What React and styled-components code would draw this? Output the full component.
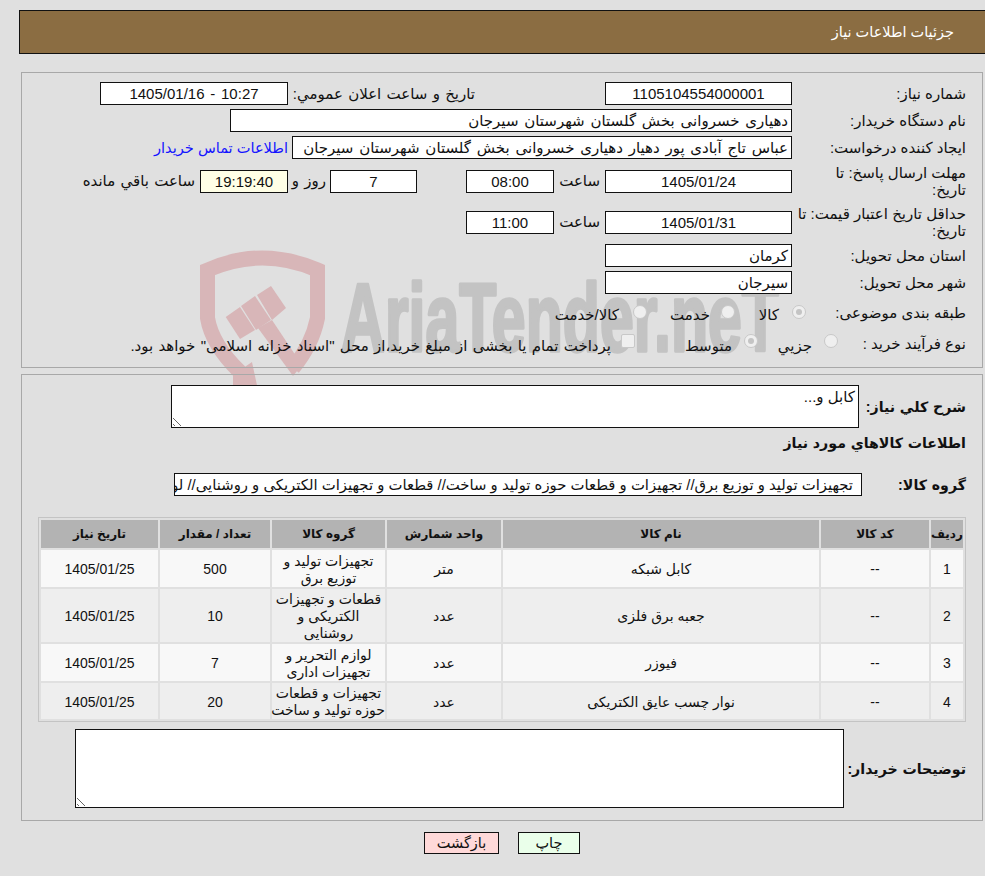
import React from "react";
import styled, { createGlobalStyle } from "styled-components";

const Global = createGlobalStyle`
  html, body { margin: 0; padding: 0; background: #e0e0e0; }
  body { font-family: "Liberation Sans", "DejaVu Sans", sans-serif; font-size: 15px; color: #111; overflow: hidden; }
`;
const Page = styled.div`
  width: 985px; height: 876px; direction: rtl; position: relative; overflow: hidden;
  padding-top: 10px; box-sizing: border-box;
`;
const Header = styled.div`
  margin-left: 19px; height: 44px; box-sizing: border-box; background: #8b6d42;
  border: 1px solid #111; border-right: none; color: #fff; font-size: 14.5px;
  display: flex; align-items: center; padding-right: 31px;
`;
const Panel = styled.div`
  margin: ${p => p.$top}px 2px 0 21px; height: ${p => p.$h}px; box-sizing: border-box;
  border: 1px solid #a8a8a8; position: relative; padding-top: ${p => p.$pt}px;
`;
const Watermark = styled.svg`
  position: absolute; left: 190px; top: 240px; pointer-events: none; direction: ltr;
`;
const Row = styled.div`
  display: flex; align-items: center; height: ${p => p.$h}px; margin-bottom: ${p => p.$mb ?? 4}px;
  margin-top: ${p => p.$mt || 0}px;
`;
const Label = styled.div`
  width: ${p => p.$w || 190}px; flex: none; box-sizing: border-box; padding: 0 16px 0 0; line-height: 17px; white-space: nowrap;
`;
const Field = styled.div`
  width: ${p => p.$w}px; height: 23px; flex: none; box-sizing: border-box; background: ${p => p.$bg || "#fff"};
  border: 1px solid #111; display: flex; align-items: center; white-space: nowrap; overflow: hidden; word-spacing: 1.6px;
  justify-content: ${p => p.$start ? "flex-start" : "center"}; padding: 0 ${p => p.$pad ?? (p.$start ? 3 : 0)}px 0 0;
  margin-right: ${p => p.$mr || 0}px;
`;
const GroupField = styled(Field)`
  word-spacing: 0; font-size: 14.85px;
`;
const Txt = styled.span`
  flex: none; margin-right: ${p => p.$mr || 0}px; width: ${p => p.$w ? p.$w + "px" : "auto"};
  white-space: nowrap; padding-top: ${p => p.$down || 0}px; word-spacing: 1.1px;
`;
const Link = styled.a`
  color: #1414ff; margin-right: 4px; white-space: nowrap; font-size: 14.6px;
`;
const Radio = styled.i`
  display: block; flex: none; width: 14px; height: 14px; box-sizing: border-box; border-radius: 50%; background: #efefef; border: 1px solid #c8c8c8; position: relative;
  margin-bottom: ${p => p.$up || 0}px;
  ${p => p.$on && `&::after { content: ""; position: absolute; inset: 3px; border-radius: 50%; background: #c4c4c4; }`}
`;
const Box = styled.i`
  display: block; flex: none; width: 14px; height: 14px; box-sizing: border-box; border-radius: 2px; background: #efefef; border: 1px solid #c8c8c8;
  margin-bottom: 4px;
`;
const Bold = styled.div`
  font-weight: 700; font-size: 14.2px; word-spacing: 0.8px; flex: none; width: ${p => p.$w ? p.$w + "px" : "auto"}; padding-right: 16px; box-sizing: border-box; white-space: nowrap;
`;
const Area = styled.div`
  width: ${p => p.$w}px; height: ${p => p.$h}px; box-sizing: border-box; background: #fff; border: 1px solid #111; flex: none;
  padding: 2px 3px; font-size: 15px; position: relative;
  &::after { content: ""; position: absolute; left: 1px; bottom: 1px; width: 9px; height: 9px;
    background: repeating-linear-gradient(45deg, transparent 0 1px, #666 1px 2px, transparent 2px 4px);
    clip-path: polygon(0 0, 100% 100%, 0 100%); }
`;
const Table = styled.table`
  border-collapse: separate; border-spacing: 2px; width: 928px; margin-right: 16px; border: 1px solid #c4c4c4;
  table-layout: fixed; font-size: 14px;
`;
const Th = styled.th`
  background: #b3b3b3; height: 28px; padding: 0; font-size: 12px; font-weight: 700;
`;
const Td = styled.td`
  background: ${p => p.$alt ? "#eee" : "#f8f8f8"}; padding: 2px 0 0; box-sizing: border-box; text-align: center; line-height: 17px; height: ${p => p.$h}px;
  white-space: nowrap;
`;
const Buttons = styled.div`
  display: flex; gap: 19px; justify-content: center; margin-top: 11px; padding-left: 19px;
`;
const Btn = styled.button`
  width: ${p => p.$w}px; height: 22px; border: 1px solid #111; background: ${p => p.$bg}; font: 14.5px "DejaVu Sans", sans-serif; color: #111; padding: 0;
`;

const rows = [
  ["1", "--", "کابل شبکه", "متر", ["تجهیزات تولید و", "توزیع برق"], "500", 37],
  ["2", "--", "جعبه برق فلزی", "عدد", ["قطعات و تجهیزات", "الکتریکی و", "روشنایی"], "10", 53],
  ["3", "--", "فیوزر", "عدد", ["لوازم التحریر و", "تجهیزات اداری"], "7", 37],
  ["4", "--", "نوار چسب عایق الکتریکی", "عدد", ["تجهیزات و قطعات", "حوزه تولید و ساخت"], "20", 36],
];

export default function App() {
  return (
    <Page>
      <Global />
      <Header>جزئیات اطلاعات نیاز</Header>
      <Watermark width="600" height="150" viewBox="190 240 600 150">
        <path fill="none" stroke="#d8b6b8" strokeWidth="15" d="M240 372 Q212 345 207.5 318 L207.5 270 Q262 246 317.5 270 L317.5 318 Q312 345 293 368" />
        <polygon fill="#d8b6b8" points="233,375 252,362 258,390 233,390" />
        <polygon fill="#d8b6b8" points="225.7,317 240,307 255,330 240,339" />
        <polygon fill="#d8b6b8" points="241,306 255,296 271,320 256,330" />
        <polygon fill="#d8b6b8" points="257,295 271,286 286,308 272,320" />
        <polygon fill="#d8b6b8" points="258,328 272,320 302,365 293,376" />
        <text x="341" y="351" fontFamily="Liberation Sans, sans-serif" fontWeight="700" fontSize="96" fill="#c3c3c3" stroke="#c3c3c3" strokeWidth="3.5" strokeLinejoin="round" textLength="438" lengthAdjust="spacingAndGlyphs">AriaTender.neT</text>
      </Watermark>
      <Panel $top={18} $h={296} $pt={9}>
        <Row $h={23}>
          <Label>شماره نیاز:</Label>
          <Field $w={187}>1105104554000001</Field>
          <Txt $mr={130} $w={182}>تاریخ و ساعت اعلان عمومي:</Txt>
          <Field $w={188} $mr={5}>10:27 - 1405/01/16</Field>
        </Row>
        <Row $h={23}>
          <Label>نام دستگاه خریدار:</Label>
          <Field $w={562} $start>دهیاری خسروانی بخش گلستان شهرستان سیرجان</Field>
        </Row>
        <Row $h={23}>
          <Label>ایجاد کننده درخواست:</Label>
          <Field $w={500} $start>عباس تاج آبادی پور دهیار دهیاری خسروانی بخش گلستان شهرستان سیرجان</Field>
          <Link>اطلاعات تماس خریدار</Link>
        </Row>
        <Row $h={36} $mb={5}>
          <Label>مهلت ارسال پاسخ: تا<br />تاریخ:</Label>
          <Field $w={187}>1405/01/24</Field>
          <Txt $mr={5} $w={46}>ساعت</Txt>
          <Field $w={88}>08:00</Field>
          <Field $w={87} $mr={49}>7</Field>
          <Txt $mr={4} $w={38}>روز و</Txt>
          <Field $w={88} $bg="#ffffe6">19:19:40</Field>
          <Txt $mr={5}>ساعت باقي مانده</Txt>
        </Row>
        <Row $h={36}>
          <Label>حداقل تاریخ اعتبار قیمت: تا<br />تاریخ:</Label>
          <Field $w={187}>1405/01/31</Field>
          <Txt $mr={5} $w={46}>ساعت</Txt>
          <Field $w={88}>11:00</Field>
        </Row>
        <Row $h={23}>
          <Label>استان محل تحویل:</Label>
          <Field $w={187} $start>کرمان</Field>
        </Row>
        <Row $h={23} $mb={6}>
          <Label>شهر محل تحویل:</Label>
          <Field $w={187} $start>سیرجان</Field>
        </Row>
        <Row $h={24} $mb={7}>
          <Label $w={176}>طبقه بندی موضوعی:</Label>
          <Radio $on />
          <Txt $mr={13} $w={44} $down={5}>کالا</Txt>
          <Radio />
          <Txt $mr={11} $w={63} $down={5}>خدمت</Txt>
          <Radio />
          <Txt $mr={14} $down={5}>کالا/خدمت</Txt>
        </Row>
        <Row $h={24}>
          <Label $w={144}>نوع فرآیند خرید :</Label>
          <Radio $up={4} />
          <Txt $mr={12} $w={54} $down={5}>جزیي</Txt>
          <Radio $on $up={4} />
          <Txt $mr={12} $w={97} $down={5}>متوسط</Txt>
          <Box />
          <Txt $mr={10} $down={5}>پرداخت تمام یا بخشی از مبلغ خرید،از محل "اسناد خزانه اسلامی" خواهد بود.</Txt>
        </Row>
      </Panel>
      <Panel $top={6} $h={447} $pt={10}>
        <Row $h={43} $mb={5}>
          <Bold $w={123}>شرح کلي نیاز:</Bold>
          <Area $w={688} $h={43}>کابل و...</Area>
        </Row>
        <Row $h={20} $mb={20}>
          <Bold>اطلاعات کالاهاي مورد نیاز</Bold>
        </Row>
        <Row $h={23} $mb={21}>
          <Bold $w={120}>گروه کالا:</Bold>
          <GroupField $w={688} $start $pad={8}>تجهیزات تولید و توزیع برق// تجهیزات و قطعات حوزه تولید و ساخت// قطعات و تجهیزات الکتریکی و روشنایی// لوازم التحریر</GroupField>
        </Row>
        <Table>
          <colgroup>
            <col width="32" /><col width="108" /><col width="316" /><col width="114" /><col width="113" /><col width="110" /><col width="117" />
          </colgroup>
          <thead>
            <tr>
              <Th>ردیف</Th><Th>کد کالا</Th><Th>نام کالا</Th><Th>واحد شمارش</Th><Th>گروه کالا</Th><Th>تعداد / مقدار</Th><Th>تاریخ نیاز</Th>
            </tr>
          </thead>
          <tbody>
            {rows.map((r, i) => (
              <tr key={r[0]}>
                <Td $alt={i % 2} $h={r[6]}>{r[0]}</Td>
                <Td $alt={i % 2}>{r[1]}</Td>
                <Td $alt={i % 2}>{r[2]}</Td>
                <Td $alt={i % 2}>{r[3]}</Td>
                <Td $alt={i % 2}>{r[4].map(line => <div key={line}>{line}</div>)}</Td>
                <Td $alt={i % 2}>{r[5]}</Td>
                <Td $alt={i % 2}>1405/01/25</Td>
              </tr>
            ))}
          </tbody>
        </Table>
        <Row $h={79} $mb={0} $mt={7}>
          <Bold $w={138}>توضیحات خریدار:</Bold>
          <Area $w={769} $h={79} />
        </Row>
      </Panel>
      <Buttons>
        <Btn $w={62} $bg="#eaffea">چاپ</Btn>
        <Btn $w={75} $bg="#ffd9d9">بازگشت</Btn>
      </Buttons>
    </Page>
  );
}
